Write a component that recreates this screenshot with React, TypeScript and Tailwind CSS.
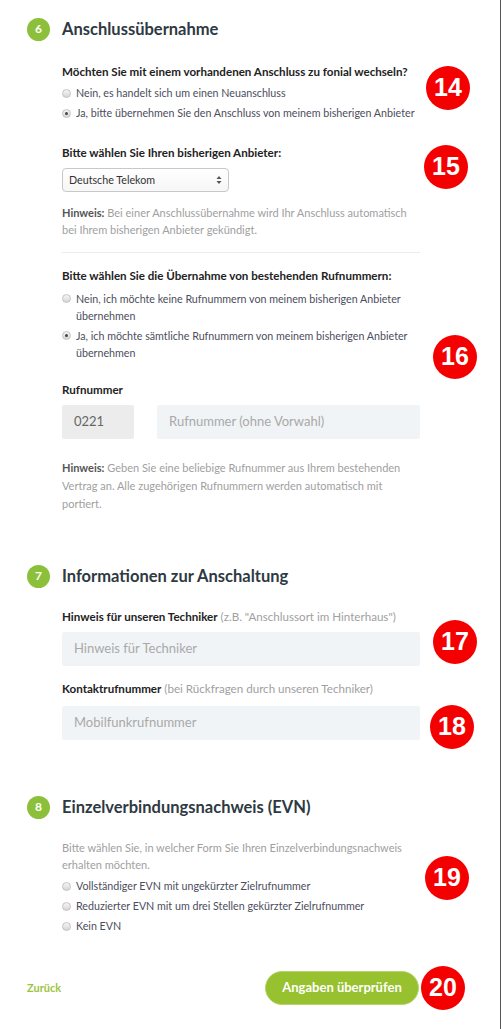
import React from "react";

const Badge = ({ n, x, y }: { n: string; x: number; y: number }) => (
  <div
    className="absolute w-[44px] h-[44px] rounded-full bg-[#f40000] text-white flex items-center justify-center text-[25px] font-bold font-['Liberation_Sans',Arial,sans-serif]"
    style={{ left: x - 22, top: y - 22 }}
  >
    {n}
  </div>
);

const Radio = ({ checked }: { checked?: boolean }) => (
  <span className="shrink-0 w-[9px] h-[9px] rounded-full border border-[#c2c2c2] bg-gradient-to-b from-[#f6f6f6] to-[#d6d6d6] flex items-center justify-center mt-[4px]">
    {checked && <span className="w-[3px] h-[3px] rounded-full bg-[#444]" />}
  </span>
);

const Step = ({ n, title, className }: { n: string; title: string; className?: string }) => (
  <div className={"flex items-center h-[24px] pl-[27px] " + (className ?? "")}>
    <span className="inline-flex shrink-0 w-[23px] h-[23px] min-w-[23px] min-h-[23px] rounded-full bg-[#8cc03a] text-white text-[12px] leading-none font-bold items-center justify-center">
      {n}
    </span>
    <span className="ml-[12px] text-[16.5px] leading-[22px] font-bold text-[#2e3942] whitespace-nowrap">{title}</span>
  </div>
);

export default function App() {
  return (
    <div className="relative w-[501px] h-[1029px] bg-white border-r border-[#555] font-['Lato','Noto_Sans',sans-serif] overflow-hidden">
      <div className="pt-[17px]">
        <Step n="6" title="Anschlussübernahme" />
        <div className="ml-[62px] w-[358px]">
          <div className="mt-[23px] leading-[16px] text-[11.6px] font-bold text-[#222] whitespace-nowrap">
            Möchten Sie mit einem vorhandenen Anschluss zu fonial wechseln?
          </div>
          <div className="mt-[3px] text-[10.7px] text-[#4b4e5c]">
            <div className="flex gap-[5px] items-start pt-[2px] h-[20px]">
              <Radio />
              <span className="leading-[16px] whitespace-nowrap">Nein, es handelt sich um einen Neuanschluss</span>
            </div>
            <div className="flex gap-[5px] items-start pt-[2px] h-[20px]">
              <Radio checked />
              <span className="leading-[16px] whitespace-nowrap">Ja, bitte übernehmen Sie den Anschluss von meinem bisherigen Anbieter</span>
            </div>
          </div>
          <div className="mt-[22px] leading-[16px] text-[11.6px] font-bold text-[#222]">
            Bitte wählen Sie Ihren bisherigen Anbieter:
          </div>
          <div className="mt-[7px] w-[167px] h-[24px] rounded-[4px] border border-[#c8c8c8] bg-gradient-to-b from-white to-[#f6f6f6] flex items-center justify-between pl-[6px] pr-[6px] text-[10.7px] text-[#333]">
            <span>Deutsche Telekom</span>
            <svg width="6" height="10" viewBox="0 0 6 10">
              <path d="M0.5 4 L3 1 L5.5 4 Z" fill="#555" />
              <path d="M0.5 6 L3 9 L5.5 6 Z" fill="#555" />
            </svg>
          </div>
          <p className="mt-[12px] text-[11px] leading-[17px] text-[#a0a0a0]">
            <b className="font-bold text-[#555]">Hinweis:</b> Bei einer Anschlussübernahme wird Ihr Anschluss automatisch bei Ihrem bisherigen Anbieter gekündigt.
          </p>
          <div className="mt-[14px] border-t border-[#ececec]" />
          <div className="mt-[15px] leading-[16px] text-[11.6px] font-bold text-[#222] whitespace-nowrap">
            Bitte wählen Sie die Übernahme von bestehenden Rufnummern:
          </div>
          <div className="mt-[6px] text-[10.7px] text-[#4b4e5c] leading-[17px]">
            <div className="flex gap-[5px] items-start">
              <Radio />
              <span>Nein, ich möchte keine Rufnummern von meinem bisherigen Anbieter übernehmen</span>
            </div>
            <div className="flex gap-[5px] items-start mt-[3px]">
              <Radio checked />
              <span>Ja, ich möchte sämtliche Rufnummern von meinem bisherigen Anbieter übernehmen</span>
            </div>
          </div>
          <div className="mt-[21px] leading-[16px] text-[11.6px] font-bold text-[#222]">Rufnummer</div>
          <div className="mt-[7px] flex gap-[23px]">
            <div className="w-[72px] h-[34px] rounded-[2px] bg-[#ececec] flex items-center pl-[12px] text-[13px] text-[#666]">
              0221
            </div>
            <div className="flex-1 h-[34px] rounded-[2px] bg-[#f1f4f6] flex items-center pl-[12px] text-[13px] text-[#a9a9a9]">
              Rufnummer (ohne Vorwahl)
            </div>
          </div>
          <p className="mt-[20px] text-[11px] leading-[18px] text-[#a0a0a0]">
            <b className="font-bold text-[#555]">Hinweis:</b> Geben Sie eine beliebige Rufnummer aus Ihrem bestehenden Vertrag an. Alle zugehörigen Rufnummern werden automatisch mit portiert.
          </p>
        </div>

        <Step n="7" title="Informationen zur Anschaltung" className="mt-[51px]" />
        <div className="ml-[62px] w-[358px]">
          <div className="mt-[21px] leading-[16px] text-[11.6px] text-[#a0a0a0] whitespace-nowrap">
            <b className="font-bold text-[#222]">Hinweis für unseren Techniker</b> (z.B. "Anschlussort im Hinterhaus")
          </div>
          <div className="mt-[7px] h-[34px] rounded-[2px] bg-[#f1f4f6] flex items-center pl-[12px] text-[13px] text-[#a9a9a9]">
            Hinweis für Techniker
          </div>
          <div className="mt-[15px] leading-[16px] text-[11.6px] text-[#a0a0a0] whitespace-nowrap">
            <b className="font-bold text-[#222]">Kontaktrufnummer</b> (bei Rückfragen durch unseren Techniker)
          </div>
          <div className="mt-[9px] h-[34px] rounded-[2px] bg-[#f1f4f6] flex items-center pl-[12px] text-[13px] text-[#a9a9a9]">
            Mobilfunkrufnummer
          </div>
        </div>

        <Step n="8" title="Einzelverbindungsnachweis (EVN)" className="mt-[55px]" />
        <div className="ml-[62px] w-[358px]">
          <div className="mt-[20px] text-[11px] leading-[17px] text-[#a0a0a0] pr-[10px]">
            Bitte wählen Sie, in welcher Form Sie Ihren Einzelverbindungsnachweis erhalten möchten.
          </div>
          <div className="mt-[3px] text-[10.7px] text-[#4b4e5c]">
            {[
              "Vollständiger EVN mit ungekürzter Zielrufnummer",
              "Reduzierter EVN mit um drei Stellen gekürzter Zielrufnummer",
              "Kein EVN",
            ].map((t) => (
              <div key={t} className="flex gap-[5px] items-start pt-[2px] h-[20px]">
                <Radio />
                <span className="leading-[16px]">{t}</span>
              </div>
            ))}
          </div>
        </div>

        <div className="mt-[35px] flex items-center justify-between pl-[27px] pr-[81px]">
          <span className="text-[11px] font-bold text-[#9cc441]">Zurück</span>
          <div className="w-[154px] h-[34px] rounded-full bg-[#97c12e] border border-[#b5d56a] flex items-center justify-center text-[13px] font-bold text-white">
            Angaben überprüfen
          </div>
        </div>
      </div>

      <Badge n="14" x={448} y={88} />
      <Badge n="15" x={446} y={167} />
      <Badge n="16" x={455} y={357} />
      <Badge n="17" x={455} y={642} />
      <Badge n="18" x={452} y={727} />
      <Badge n="19" x={447} y={878} />
      <Badge n="20" x={443} y={988} />
    </div>
  );
}
